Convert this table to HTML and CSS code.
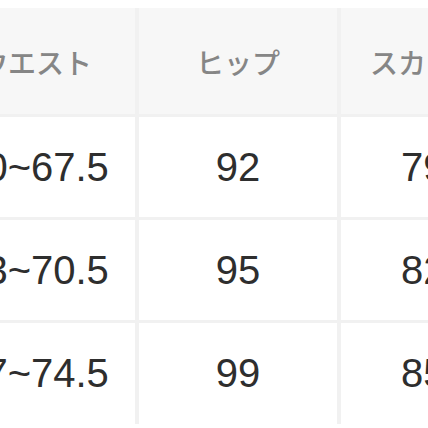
FILE: index.html
```html
<!DOCTYPE html>
<html lang="ja">
<head>
<meta charset="utf-8">
<link rel="stylesheet" href="styles.css">
</head>
<body>
<div class="viewport">
  <div class="table">
    <div class="cell head">ウエスト</div>
    <div class="cell head">ヒップ</div>
    <div class="cell head">スカート丈</div>
    <div class="cell val">60~67.5</div>
    <div class="cell val">92</div>
    <div class="cell val">79.5</div>
    <div class="cell val">63~70.5</div>
    <div class="cell val">95</div>
    <div class="cell val">82.5</div>
    <div class="cell val">67~74.5</div>
    <div class="cell val">99</div>
    <div class="cell val">85.5</div>
  </div>
</div>
</body>
</html>
```
FILE: styles.css
```css
html, body {
  margin: 0;
  padding: 0;
  background: #ffffff;
}
.viewport {
  width: 428px;
  height: 428px;
  overflow: hidden;
  padding-top: 8px;
  box-sizing: border-box;
}
.table {
  display: grid;
  grid-template-columns: repeat(3, 198px);
  grid-template-rows: 106px 100px 100px 101px;
  column-gap: 4px;
  row-gap: 3px;
  margin-left: -63px;
  width: 602px;
  background: #f1f1f1;
}
.cell {
  display: flex;
  align-items: center;
  justify-content: center;
  white-space: nowrap;
}
.head {
  background: #f7f7f7;
  color: #868686;
  font-family: "Noto Sans CJK JP", sans-serif;
  font-size: 28px;
  font-weight: 500;
  padding-top: 2px;
}
.val {
  background: #ffffff;
  color: #2e2e2e;
  font-family: "Liberation Sans", Arial, sans-serif;
  font-size: 40px;
}
```
